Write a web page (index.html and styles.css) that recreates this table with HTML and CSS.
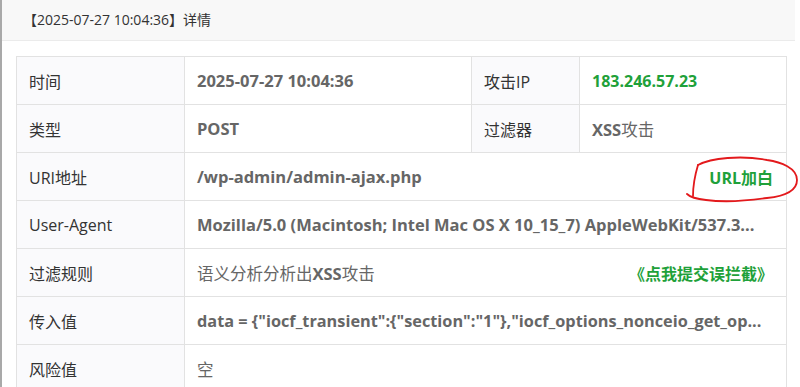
FILE: index.html
```html
<!DOCTYPE html>
<html lang="zh-CN">
<head>
<meta charset="utf-8">
<title>详情</title>
<link rel="stylesheet" href="styles.css">
</head>
<body>
<div class="modal">
  <div class="modal-header">【2025-07-27 10:04:36】详情</div>
  <div class="modal-body">
    <table class="detail">
      <colgroup>
        <col class="c1"><col class="c2"><col class="c3"><col class="c4">
      </colgroup>
      <tr>
        <td class="label">时间</td>
        <td class="value">2025-07-27 10:04:36</td>
        <td class="label">攻击IP</td>
        <td class="value ip">183.246.57.23</td>
      </tr>
      <tr>
        <td class="label">类型</td>
        <td class="value">POST</td>
        <td class="label">过滤器</td>
        <td class="value">XSS<span class="cjk">攻击</span></td>
      </tr>
      <tr>
        <td class="label">URI地址</td>
        <td class="value" colspan="3">
          <div class="split">
            <span>/wp-admin/admin-ajax.php</span>
            <span class="green action">URL加白
              <svg class="scribble" viewBox="0 0 120 60" width="120" height="60">
                <path d="M12 15 C 25 8, 55 5, 81 10 C 95 12, 111 18, 111 30 C 111 40, 100 46, 81 48 C 60 51, 35 52, 20 50 C 10 49, 4 47, 1 44" />
                <path d="M12 15 C 9 25, 7 35, 7 46" />
              </svg>
            </span>
          </div>
        </td>
      </tr>
      <tr>
        <td class="label">User-Agent</td>
        <td class="value clip" colspan="3">Mozilla/5.0 (Macintosh; Intel Mac OS X 10_15_7) AppleWebKit/537.3...</td>
      </tr>
      <tr>
        <td class="label">过滤规则</td>
        <td class="value" colspan="3">
          <div class="split">
            <span><span class="cjk">语义分析分析出</span>XSS<span class="cjk">攻击</span></span>
            <span class="green">《点我提交误拦截》</span>
          </div>
        </td>
      </tr>
      <tr>
        <td class="label">传入值</td>
        <td class="value clip data" colspan="3">data = {"iocf_transient":{"section":"1"},"iocf_options_nonceio_get_op...</td>
      </tr>
      <tr>
        <td class="label">风险值</td>
        <td class="value" colspan="3"><span class="cjk">空</span></td>
      </tr>
    </table>
  </div>
</div>
</body>
</html>
```

FILE: styles.css
```css
html, body {
  margin: 0;
  padding: 0;
  background: #ffffff;
  overflow: hidden;
}

body {
  font-family: "Open Sans", "Noto Sans CJK SC", sans-serif;
  color: #333333;
}

.modal {
  width: 795px;
  height: 387px;
  box-sizing: border-box;
  border-left: 2px solid #a9a9a9;
  background: #ffffff;
}

.modal-header {
  height: 41px;
  box-sizing: border-box;
  background: #f8f8f8;
  border-bottom: 1px solid #ebebeb;
  padding-left: 21px;
  font-size: 14px;
  line-height: 40px;
  color: #333333;
}

.modal-body {
  padding: 15px 0 0 14px;
}

.detail {
  width: 770px;
  table-layout: fixed;
  border-collapse: collapse;
  border: 1px solid #e2e2e2;
}

.c1 { width: 168px; }
.c2 { width: 287px; }
.c3 { width: 108px; }
.c4 { width: 207px; }

.detail td {
  height: 48px;
  box-sizing: border-box;
  border: 1px solid #e2e2e2;
  padding: 0 13px 0 12px;
  font-size: 16px;
  vertical-align: middle;
  white-space: nowrap;
}

.label {
  background: #fafafc;
  color: #333333;
  font-weight: 400;
}

.detail td.value {
  color: #666666;
  font-weight: 700;
  font-size: 16.5px;
}

.detail td.ip {
  color: #1fa13a;
  font-size: 16px;
}

.detail td.data {
  font-size: 16.3px;
}

.cjk {
  font-weight: 400;
}

.green {
  color: #1fa13a;
  font-weight: 700;
  font-size: 16px;
}

.clip {
  overflow: hidden;
  text-overflow: ellipsis;
}

.split {
  display: flex;
  justify-content: space-between;
  align-items: center;
}

.action {
  position: relative;
}

.scribble {
  position: absolute;
  left: -23px;
  top: -15px;
  fill: none;
  stroke: #e3191c;
  stroke-width: 1.8;
  stroke-linecap: round;
  overflow: visible;
}
```
